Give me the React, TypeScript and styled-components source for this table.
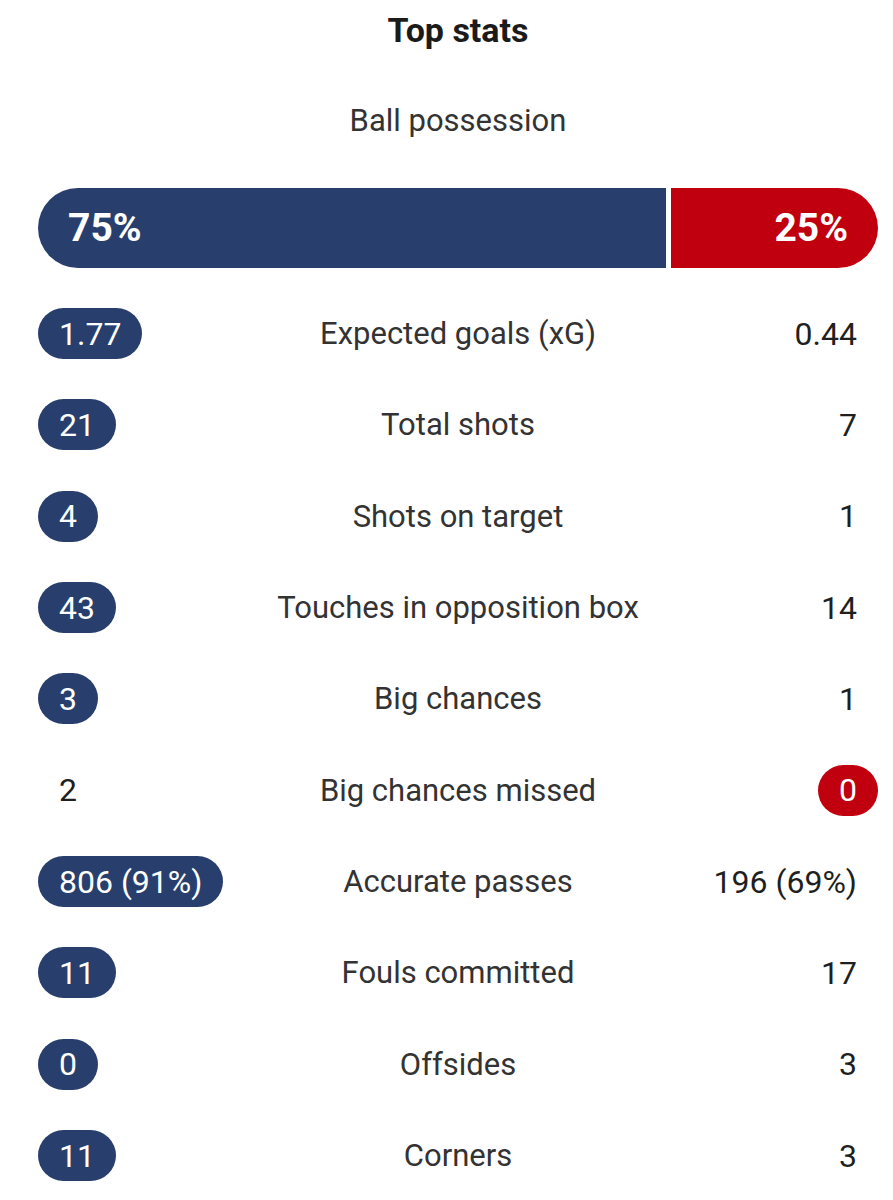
import React from "react";
import styled, { createGlobalStyle } from "styled-components";

const Global = createGlobalStyle`
  html, body { margin: 0; padding: 0; background: #ffffff; }
  body { font-family: Roboto, "Noto Sans", sans-serif; color: #222; }
`;

const BLUE = "#283f6d";
const RED = "#c0000e";

const Page = styled.div`
  width: 893px;
  box-sizing: border-box;
  padding: 0 15px 0 38px;
  display: flex;
  flex-direction: column;
`;

const Title = styled.h2`
  margin: 0;
  height: 60px;
  display: flex;
  align-items: center;
  justify-content: center;
  font-size: 34px;
  font-weight: 700;
  color: #1b1b1b;
`;

const SubTitle = styled.div`
  height: 120px;
  margin-bottom: 8px;
  display: flex;
  align-items: center;
  justify-content: center;
  font-size: 31px;
  color: #333;
`;

const Bar = styled.div`
  height: 80px;
  display: flex;
  gap: 5px;
  border-radius: 40px;
  overflow: hidden;
`;

const BarPart = styled.div<{ $side: "home" | "away" }>`
  box-sizing: border-box;
  flex: 0 0 auto;
  display: flex;
  align-items: center;
  justify-content: ${(p) => (p.$side === "home" ? "flex-start" : "flex-end")};
  padding: 0 30px;
  background: ${(p) => (p.$side === "home" ? BLUE : RED)};
  color: #fff;
  font-size: 39px;
  font-weight: 700;
`;

const Rows = styled.div`
  margin-top: 20px;
  display: flex;
  flex-direction: column;
`;

const Row = styled.div`
  height: 91.33px;
  display: grid;
  grid-template-columns: 1fr auto 1fr;
  align-items: center;
`;

const Label = styled.div`
  font-size: 31px;
  color: #333;
  text-align: center;
`;

const Value = styled.div<{ $side: "home" | "away"; $hl: boolean }>`
  justify-self: ${(p) => (p.$side === "home" ? "start" : "end")};
  height: 51px;
  padding: 0 21px;
  min-width: 16px;
  display: flex;
  align-items: center;
  justify-content: center;
  border-radius: 26px;
  font-size: 32px;
  color: ${(p) => (p.$hl ? "#fff" : "#1f1f1f")};
  background: ${(p) => (p.$hl ? (p.$side === "home" ? BLUE : RED) : "transparent")};
`;

type Stat = { label: string; home: string; away: string; win: "home" | "away" };

const stats: Stat[] = [
  { label: "Expected goals (xG)", home: "1.77", away: "0.44", win: "home" },
  { label: "Total shots", home: "21", away: "7", win: "home" },
  { label: "Shots on target", home: "4", away: "1", win: "home" },
  { label: "Touches in opposition box", home: "43", away: "14", win: "home" },
  { label: "Big chances", home: "3", away: "1", win: "home" },
  { label: "Big chances missed", home: "2", away: "0", win: "away" },
  { label: "Accurate passes", home: "806 (91%)", away: "196 (69%)", win: "home" },
  { label: "Fouls committed", home: "11", away: "17", win: "home" },
  { label: "Offsides", home: "0", away: "3", win: "home" },
  { label: "Corners", home: "11", away: "3", win: "home" },
];

export default function App() {
  const home = 75;
  return (
    <>
      <Global />
      <Page>
        <Title>Top stats</Title>
        <SubTitle>Ball possession</SubTitle>
        <Bar>
          <BarPart $side="home" style={{ flexBasis: `calc(${home}% - 2.5px)` }}>{home}%</BarPart>
          <BarPart $side="away" style={{ flexBasis: `calc(${100 - home}% - 2.5px)` }}>{100 - home}%</BarPart>
        </Bar>
        <Rows>
          {stats.map((s) => (
            <Row key={s.label}>
              <Value $side="home" $hl={s.win === "home"}>{s.home}</Value>
              <Label>{s.label}</Label>
              <Value $side="away" $hl={s.win === "away"}>{s.away}</Value>
            </Row>
          ))}
        </Rows>
      </Page>
    </>
  );
}
